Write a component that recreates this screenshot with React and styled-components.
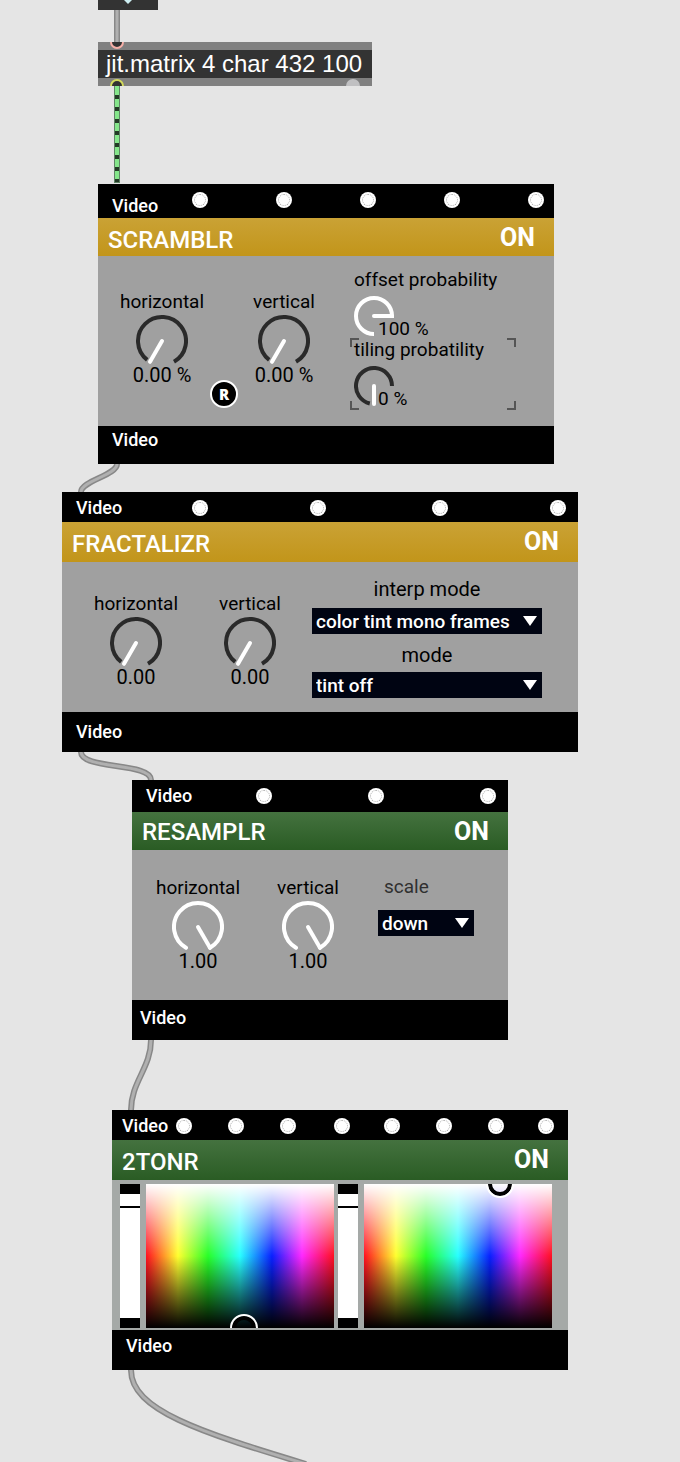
import React, { useId, useState } from "react";
import styled, { createGlobalStyle } from "styled-components";

const GlobalStyle = createGlobalStyle`
  *, *::before, *::after { box-sizing: border-box; }
  body {
    margin: 0;
    background: #e5e5e5;
    font-family: Roboto, "Liberation Sans", sans-serif;
    color: #000;
  }
  button, select, input { font-family: inherit; }
`;

const Patcher = styled.main`
  display: flex;
  flex-direction: column;
  align-items: flex-start;
  overflow: hidden;
`;

/* ---------- cables ---------- */

const CableSvg = styled.svg`
  display: block;
  width: 100%;
  height: ${(p) => p.$height}px;
`;

function Cable({ height, d }) {
  return (
    <CableSvg $height={height} aria-hidden="true">
      <path d={d} fill="none" stroke="#888888" strokeWidth="6" />
      <path d={d} fill="none" stroke="#b0b0b0" strokeWidth="3" />
    </CableSvg>
  );
}

function MatrixCable() {
  return (
    <CableSvg $height={98} aria-hidden="true">
      <path d="M117 0V97" stroke="#5f8265" strokeWidth="6" />
      <path d="M117 0V96" stroke="#84e68a" strokeWidth="4" />
      <path d="M117 9V96" stroke="#233a26" strokeWidth="4" strokeDasharray="4 8" />
    </CableSvg>
  );
}

/* ---------- plain objects ---------- */

const ToggleStub = styled.div`
  width: 60px;
  height: 10px;
  margin-left: 98px;
  background: #333;
`;

const ObjectBox = styled.section`
  width: 274px;
  margin-left: 98px;
  background: #333;
`;

const PortStrip = styled.svg`
  display: block;
  width: 100%;
  height: 8px;
  background: #808080;
`;

const ObjectText = styled.div`
  padding-left: 8px;
  font: 24px/28px "Liberation Sans", Arial, sans-serif;
  color: #fff;
  white-space: nowrap;
`;

/* ---------- module chrome ---------- */

const Module = styled.section`
  width: ${(p) => p.$width}px;
  margin-left: ${(p) => p.$left}px;
`;

const Strip = styled.div`
  display: flex;
  align-items: flex-start;
  justify-content: space-between;
  height: ${(p) => p.$height}px;
  background: #000;
`;

const StripLabel = styled.span`
  padding: ${(p) => p.$top}px 0 0 ${(p) => p.$left}px;
  font-size: 18px;
  font-weight: 500;
  line-height: 20px;
  color: #fff;
`;

const Inlets = styled.div`
  display: grid;
  grid-template-columns: ${(p) => p.$columns};
  padding: 8px ${(p) => p.$right}px 0 0;
`;

const Inlet = styled.span`
  width: 16px;
  height: 16px;
  padding: 2px;
  border-radius: 50%;
  background: #fff;

  &::before {
    content: "";
    display: block;
    height: 12px;
    border: 1px dotted #a8a8a8;
    border-radius: 50%;
  }
`;

const tones = {
  gold: "linear-gradient(#caa235, #c2951a)",
  green: "linear-gradient(#44723f, #2a5c24)",
};

const TitleBar = styled.header`
  display: flex;
  align-items: flex-start;
  justify-content: space-between;
  height: ${(p) => p.$height}px;
  padding: 0 18px 0 10px;
  background: ${(p) => tones[p.$tone]};
`;

const Title = styled.h2`
  margin: 0;
  padding-top: ${(p) => p.$top}px;
  font-size: 24px;
  font-weight: 500;
  line-height: 28px;
  color: #fff;
`;

const PowerButton = styled.button`
  margin: 0;
  padding: 6px 1px 0 0;
  border: 0;
  background: none;
  font-size: 25px;
  font-weight: 700;
  line-height: 28px;
  color: #fff;
`;

const Body = styled.div`
  display: flex;
  align-items: flex-start;
  height: ${(p) => p.$height}px;
  gap: ${(p) => p.$gap}px;
  padding-left: ${(p) => p.$left}px;
  background: #a0a0a0;
`;

const KnobRow = styled.div`
  display: flex;
  gap: ${(p) => p.$gap}px;
  padding-top: ${(p) => p.$top}px;
`;

/* ---------- dials ---------- */

const Label = styled.label`
  display: block;
  padding-top: 1px;
  font-size: 19px;
  line-height: 22px;
  color: ${(p) => (p.$dim ? "#303030" : "#000")};
  white-space: nowrap;
`;

const Value = styled.output`
  font-size: 20px;
  line-height: 20px;
  white-space: nowrap;
`;

const KnobColumn = styled.div`
  display: flex;
  flex-direction: column;
  align-items: center;
  width: 92px;
`;

const KnobFace = styled.div`
  position: relative;
  width: 52px;
  height: 50px;
  margin-top: 2px;
`;

const HiddenRange = styled.input`
  position: absolute;
  inset: 0;
  width: 100%;
  height: 100%;
  margin: 0;
  opacity: 0;
`;

const Drawing = styled.svg`
  display: block;
`;

function Knob({ label, value, full }) {
  const id = useId();
  return (
    <KnobColumn>
      <Label htmlFor={id}>{label}</Label>
      <KnobFace>
        <Drawing width="52" height="50" aria-hidden="true">
          {full ? (
            <g fill="none" stroke="#fff" strokeWidth="4">
              <path d="M14 46.8A24 24 0 1 1 38 46.8" strokeLinecap="round" />
              <path d="M26 26L38 46.8" strokeLinecap="round" />
            </g>
          ) : (
            <g fill="none" strokeWidth="4">
              <path d="M11.2 44.9A24 24 0 1 1 38 46.8" stroke="#2a2a2a" />
              <path d="M26 26L14 46.8" stroke="#fff" strokeLinecap="round" />
            </g>
          )}
        </Drawing>
        <HiddenRange id={id} type="range" min="0" max="1" step="0.01" defaultValue={full ? 1 : 0} />
      </KnobFace>
      <Value htmlFor={id}>{value}</Value>
    </KnobColumn>
  );
}

const ResetSlot = styled.div`
  display: flex;
  justify-content: flex-end;
  width: 30px;
  padding-top: 90px;
`;

const ResetButton = styled.button`
  flex: none;
  width: 28px;
  height: 28px;
  padding: 0;
  border: 2px solid #fff;
  border-radius: 50%;
  background: #000;
  font-family: "Open Sans", "Noto Sans", sans-serif;
  font-size: 15px;
  font-weight: 800;
  line-height: 24px;
  color: #fff;
`;

const DialStack = styled.div`
  padding-top: 12px;
`;

const DialBlock = styled.div`
  position: relative;
  width: 166px;
`;

const DialLine = styled.div`
  display: grid;
  grid-template-columns: 24px auto;
  align-items: end;
  height: 42px;
  margin-top: 5px;
`;

const DialFace = styled.div`
  position: relative;
  align-self: start;
  width: 40px;
  height: 40px;
`;

const DialValue = styled(Value)`
  position: relative;
  font-size: 19px;
  line-height: 18px;
`;

const SelectionFrame = styled.svg`
  position: absolute;
  top: 0;
  left: -4px;
`;

function Dial({ label, value, full, selected }) {
  const id = useId();
  return (
    <DialBlock>
      {selected && (
        <SelectionFrame width="166" height="72" aria-hidden="true">
          <path
            d="M1 9V1H9M157 1H165V9M165 63V71H157M9 71H1V63"
            fill="none"
            stroke="#555"
            strokeWidth="2"
          />
        </SelectionFrame>
      )}
      <Label htmlFor={id}>{label}</Label>
      <DialLine>
        <DialFace>
          <Drawing width="40" height="40" aria-hidden="true">
            {full ? (
              <g fill="none" stroke="#fff" strokeWidth="4">
                <path d="M20 38A18 18 0 1 1 38 20V22" />
                <path d="M20 20H38" strokeLinecap="round" />
              </g>
            ) : (
              <g fill="none" strokeWidth="4">
                <path d="M15.8 37.5A18 18 0 1 1 38 20" stroke="#2a2a2a" />
                <path d="M20 20V38" stroke="#fff" strokeLinecap="round" />
              </g>
            )}
          </Drawing>
          <HiddenRange id={id} type="range" min="0" max="100" defaultValue={full ? 100 : 0} />
        </DialFace>
        <DialValue htmlFor={id}>{value}</DialValue>
      </DialLine>
    </DialBlock>
  );
}

/* ---------- menus ---------- */

const Fields = styled.div`
  display: flex;
  flex-direction: column;
  gap: 9px;
  width: ${(p) => p.$width}px;
  padding-top: ${(p) => p.$top}px;
`;

const Field = styled.div`
  display: flex;
  flex-direction: column;
  gap: ${(p) => p.$gap}px;
`;

const FieldLabel = styled(Label)`
  padding-left: ${(p) => (p.$centered ? 0 : 6)}px;
  text-align: ${(p) => (p.$centered ? "center" : "left")};
  font-size: ${(p) => (p.$centered ? 20 : 19)}px;
`;

const MenuBox = styled.div`
  position: relative;
`;

const MenuSelect = styled.select`
  appearance: none;
  display: block;
  width: 100%;
  height: 26px;
  margin: 0;
  padding: 2px 0 0 4px;
  border: 0;
  border-radius: 0;
  background: #000412;
  font-size: 19px;
  font-weight: 500;
  line-height: 24px;
  color: #fff;
`;

const MenuArrow = styled.svg`
  position: absolute;
  top: 8px;
  right: 5px;
  pointer-events: none;
`;

function Menu({ label, option, gap = 8, centered, dim }) {
  const id = useId();
  return (
    <Field $gap={gap}>
      <FieldLabel htmlFor={id} $centered={centered} $dim={dim}>
        {label}
      </FieldLabel>
      <MenuBox>
        <MenuSelect id={id} defaultValue={option}>
          <option>{option}</option>
        </MenuSelect>
        <MenuArrow width="14" height="10" aria-hidden="true">
          <path d="M0 0H14L7 10Z" fill="#fff" />
        </MenuArrow>
      </MenuBox>
    </Field>
  );
}

/* ---------- colour pickers ---------- */

const ColorBody = styled.div`
  display: flex;
  gap: 4px;
  height: 150px;
  padding: 4px 8px 2px;
  background: #a5a9a7;
`;

const ColorPair = styled.div`
  display: flex;
  gap: 6px;
`;

const Fader = styled.div`
  position: relative;
  width: 20px;
  border: solid #000;
  border-width: 10px 0;
  padding-top: 12px;
  background: #fff;

  &::before {
    content: "";
    display: block;
    height: 2px;
    background: #000;
  }
`;

const Swatch = styled.div`
  position: relative;
  width: 188px;
  overflow: hidden;
  background:
    linear-gradient(transparent 50%, #000),
    linear-gradient(#fff, rgba(255, 255, 255, 0) 50%),
    linear-gradient(90deg, #ff1020, #ffff30 17%, #28ff28 33%, #28ffff 50%, #0820ff 67%, #ff28ff 83%, #ff1020);
`;

const Marker = styled.span`
  position: absolute;
  left: ${(p) => p.$x}px;
  top: ${(p) => p.$y}px;
  width: 28px;
  height: 28px;
  margin: -14px 0 0 -14px;
  border: 2px solid #fff;
  border-radius: 50%;
  box-shadow: inset 0 0 0 4px #000;
`;

function ColorPicker({ name, x, y }) {
  return (
    <ColorPair>
      <Fader>
        <HiddenRange type="range" aria-label={`${name} level`} defaultValue={90} />
      </Fader>
      <Swatch role="img" aria-label={`${name} colour`}>
        <Marker $x={x} $y={y} />
      </Swatch>
    </ColorPair>
  );
}

/* ---------- module ---------- */

function VideoModule({
  name, tone, left, width, inlets, inletRight = 10,
  headHeight = 30, headLeft = 14, headTop = 6,
  titleHeight = 40, titleTop = 8,
  footHeight = 40, footLeft = 14, footTop,
  children,
}) {
  const [on, setOn] = useState(true);
  return (
    <Module $left={left} $width={width}>
      <Strip $height={headHeight}>
        <StripLabel $left={headLeft} $top={headTop}>Video</StripLabel>
        <Inlets $columns={`${inlets.map((n) => `${n}px`).join(" ")} 16px`} $right={inletRight}>
          {[...inlets, 16].map((_, i) => <Inlet key={i} />)}
        </Inlets>
      </Strip>
      <TitleBar $tone={tone} $height={titleHeight}>
        <Title $top={titleTop}>{name}</Title>
        <PowerButton type="button" aria-pressed={on} onClick={() => setOn(!on)}>
          {on ? "ON" : "OFF"}
        </PowerButton>
      </TitleBar>
      {children}
      <Strip $height={footHeight}>
        <StripLabel $left={footLeft} $top={footTop}>Video</StripLabel>
      </Strip>
    </Module>
  );
}

export default function App() {
  return (
    <>
      <GlobalStyle />
      <Patcher>
        <ToggleStub>
          <Drawing width="60" height="10" aria-hidden="true">
            <path d="M26 0H34L30 4Z" fill="#cdeef2" />
          </Drawing>
        </ToggleStub>
        <Cable height={32} d="M117 0V32" />

        <ObjectBox>
          <PortStrip aria-hidden="true">
            <circle cx="19" cy="0" r="6" fill="#333" stroke="#f7b0a8" strokeWidth="2" />
          </PortStrip>
          <ObjectText>jit.matrix 4 char 432 100</ObjectText>
          <PortStrip aria-hidden="true">
            <circle cx="19" cy="8" r="6" fill="#333" stroke="#d3da5c" strokeWidth="2" />
            <circle cx="255" cy="8" r="7" fill="#c0c0c2" />
          </PortStrip>
        </ObjectBox>
        <MatrixCable />

        <VideoModule
          name="SCRAMBLR" tone="gold" left={98} width={456}
          inlets={[84, 84, 84, 84]}
          headHeight={34} headTop={12} titleHeight={38}
          footHeight={38} footTop={4}
        >
          <Body $height={170} $left={18} $gap={24}>
            <KnobRow $top={34} $gap={0}>
              <Knob label="horizontal" value="0.00 %" />
              <ResetSlot>
                <ResetButton type="button">R</ResetButton>
              </ResetSlot>
              <Knob label="vertical" value="0.00 %" />
            </KnobRow>
            <DialStack>
              <Dial label="offset probability" value="100 %" full />
              <Dial label="tiling probatility" value="0 %" selected />
            </DialStack>
          </Body>
        </VideoModule>
        <Cable height={28} d="M117 0C117 11 81 17 81 28" />

        <VideoModule
          name="FRACTALIZR" tone="gold" left={62} width={516}
          inlets={[118, 122, 118]} inletRight={12} footTop={10}
        >
          <Body $height={150} $left={28} $gap={16}>
            <KnobRow $top={30} $gap={22}>
              <Knob label="horizontal" value="0.00" />
              <Knob label="vertical" value="0.00" />
            </KnobRow>
            <Fields $width={230} $top={15}>
              <Menu label="interp mode" option="color tint mono frames" centered />
              <Menu label="mode" option="tint off" gap={6} centered />
            </Fields>
          </Body>
        </VideoModule>
        <Cable height={28} d="M81 0C81 18 151 10 151 28" />

        <VideoModule
          name="RESAMPLR" tone="green" left={132} width={376}
          inlets={[112, 112]} inletRight={12}
          headHeight={32} titleHeight={38} titleTop={6}
          footLeft={8} footTop={8}
        >
          <Body $height={150} $left={20} $gap={24}>
            <KnobRow $top={26} $gap={18}>
              <Knob label="horizontal" value="1.00" full />
              <Knob label="vertical" value="1.00" full />
            </KnobRow>
            <Fields $width={96} $top={25}>
              <Menu label="scale" option="down" gap={12} dim />
            </Fields>
          </Body>
        </VideoModule>
        <Cable height={70} d="M151 0C151 28 131 42 131 70" />

        <VideoModule
          name="2TONR" tone="green" left={112} width={456}
          inlets={[52, 52, 54, 50, 52, 52, 50]} inletRight={14}
          headLeft={10} footTop={6}
        >
          <ColorBody>
            <ColorPicker name="First" x={98} y={144} />
            <ColorPicker name="Second" x={136} y={0} />
          </ColorBody>
        </VideoModule>
        <Cable height={92} d="M131 0C131 40 200 62 306 94" />
      </Patcher>
    </>
  );
}
